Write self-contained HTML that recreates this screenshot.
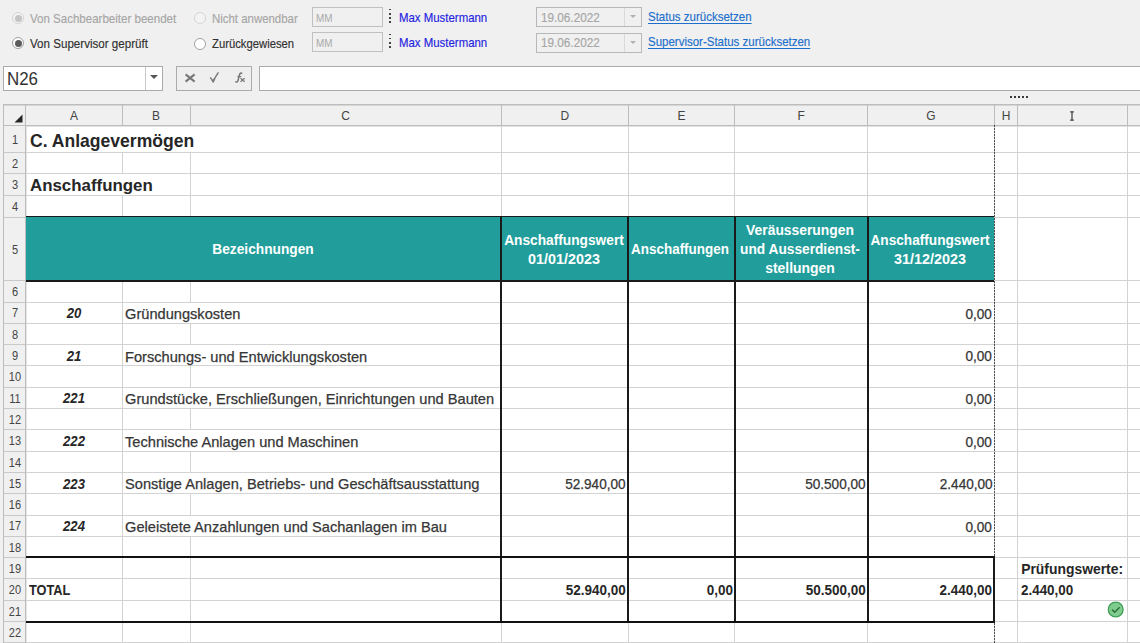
<!DOCTYPE html>
<html><head><meta charset="utf-8"><style>
html,body{margin:0;padding:0;overflow:hidden;width:1140px;height:643px;background:#f0f0f0}
#root{width:1140px;height:643px;overflow:hidden;position:relative;font-family:"Liberation Sans",sans-serif;background:#f0f0f0}
#root>div,#root>span,#root>svg{position:absolute}
.t{white-space:pre;display:block}
</style></head><body><div id="root">
<div style="left:0px;top:0px;width:1140px;height:643px;background:#f0f0f0"></div>
<div style="left:26px;top:125px;width:1114px;height:518px;background:#fff"></div>
<div style="left:11.9px;top:11.7px;width:10px;height:10px;border:1.5px solid #d4d4d4;border-radius:50%;background:#f3f3f3"></div>
<div style="left:14.9px;top:14.7px;width:7px;height:7px;border-radius:50%;background:#c3c3c3"></div>
<div style="left:11.9px;top:37.3px;width:10px;height:10px;border:1.5px solid #a0a0a0;border-radius:50%;background:#fff"></div>
<div style="left:14.9px;top:40.3px;width:7px;height:7px;border-radius:50%;background:#5c5c5c"></div>
<div style="left:193.9px;top:11.8px;width:10px;height:10px;border:1.5px solid #d4d4d4;border-radius:50%;background:#f3f3f3"></div>
<div style="left:193.9px;top:37.5px;width:10px;height:10px;border:1.5px solid #a0a0a0;border-radius:50%;background:#fff"></div>
<span class="t" style="top:12.14px;font-size:12.2px;line-height:15.86px;color:#a6a6a6;left:29.5px;transform:scaleX(0.946);transform-origin:left;-webkit-text-stroke:0.15px currentColor;">Von Sachbearbeiter beendet</span>
<span class="t" style="top:37.14px;font-size:12.2px;line-height:15.86px;color:#303030;left:29.5px;transform:scaleX(0.951);transform-origin:left;-webkit-text-stroke:0.15px currentColor;">Von Supervisor geprüft</span>
<span class="t" style="top:12.24px;font-size:12.2px;line-height:15.86px;color:#a6a6a6;left:211.6px;transform:scaleX(0.937);transform-origin:left;-webkit-text-stroke:0.15px currentColor;">Nicht anwendbar</span>
<span class="t" style="top:37.24px;font-size:12.2px;line-height:15.86px;color:#303030;left:211.6px;transform:scaleX(0.925);transform-origin:left;-webkit-text-stroke:0.15px currentColor;">Zurückgewiesen</span>
<div style="left:312.4px;top:6.8px;width:70.9px;height:19.8px;border:1px solid #c0c0c0;box-sizing:border-box;background:#f0f0f0"></div>
<span class="t" style="top:10.64px;font-size:11px;line-height:14.3px;color:#a9a9a9;left:316.3px;transform:scaleX(0.9);transform-origin:left;">MM</span>
<div style="left:312.4px;top:32.4px;width:70.9px;height:20.1px;border:1px solid #c0c0c0;box-sizing:border-box;background:#f0f0f0"></div>
<span class="t" style="top:35.74px;font-size:11px;line-height:14.3px;color:#a9a9a9;left:316.3px;transform:scaleX(0.9);transform-origin:left;">MM</span>
<div style="left:389.0px;top:8.7px;width:1.6px;height:1.6px;background:#444"></div>
<div style="left:389.0px;top:13.0px;width:1.6px;height:1.6px;background:#444"></div>
<div style="left:389.0px;top:17.2px;width:1.6px;height:1.6px;background:#444"></div>
<div style="left:389.0px;top:21.4px;width:1.6px;height:1.6px;background:#444"></div>
<div style="left:389.0px;top:33.6px;width:1.6px;height:1.6px;background:#444"></div>
<div style="left:389.0px;top:37.8px;width:1.6px;height:1.6px;background:#444"></div>
<div style="left:389.0px;top:42.0px;width:1.6px;height:1.6px;background:#444"></div>
<div style="left:389.0px;top:46.2px;width:1.6px;height:1.6px;background:#444"></div>
<span class="t" style="top:10.84px;font-size:12.2px;line-height:15.86px;color:#1f1fe0;left:399.0px;transform:scaleX(0.937);transform-origin:left;-webkit-text-stroke:0.15px currentColor;">Max Mustermann</span>
<span class="t" style="top:35.84px;font-size:12.2px;line-height:15.86px;color:#1f1fe0;left:399.0px;transform:scaleX(0.937);transform-origin:left;-webkit-text-stroke:0.15px currentColor;">Max Mustermann</span>
<div style="left:536.3px;top:6.8px;width:105.4px;height:20.0px;border:1px solid #b8b8b8;box-sizing:border-box;background:#f0f0f0"></div>
<div style="left:624.0px;top:7.8px;width:1.0px;height:18.0px;background:#dadada"></div>
<div style="left:630.2px;top:15.3px;width:0;height:0;border-left:3.2px solid transparent;border-right:3.2px solid transparent;border-top:3.2px solid #b0b0b0"></div>
<span class="t" style="top:10.94px;font-size:12.2px;line-height:15.86px;color:#a6a6a6;left:540.8px;transform:scaleX(0.963);transform-origin:left;-webkit-text-stroke:0.15px currentColor;">19.06.2022</span>
<div style="left:536.3px;top:32.5px;width:105.4px;height:20.0px;border:1px solid #b8b8b8;box-sizing:border-box;background:#f0f0f0"></div>
<div style="left:624.0px;top:33.5px;width:1.0px;height:18.0px;background:#dadada"></div>
<div style="left:630.2px;top:41.0px;width:0;height:0;border-left:3.2px solid transparent;border-right:3.2px solid transparent;border-top:3.2px solid #b0b0b0"></div>
<span class="t" style="top:35.94px;font-size:12.2px;line-height:15.86px;color:#a6a6a6;left:540.8px;transform:scaleX(0.963);transform-origin:left;-webkit-text-stroke:0.15px currentColor;">19.06.2022</span>
<span class="t" style="top:10.44px;font-size:12.2px;line-height:15.86px;color:#1c6fcc;left:648.3px;transform:scaleX(0.944);transform-origin:left;text-decoration:underline;text-underline-offset:1.5px;-webkit-text-stroke:0.15px currentColor;">Status zurücksetzen</span>
<span class="t" style="top:35.44px;font-size:12.2px;line-height:15.86px;color:#1c6fcc;left:648.3px;transform:scaleX(0.943);transform-origin:left;text-decoration:underline;text-underline-offset:1.5px;-webkit-text-stroke:0.15px currentColor;">Supervisor-Status zurücksetzen</span>
<div style="left:3px;top:66.3px;width:159.6px;height:24.3px;border:1px solid #ababab;box-sizing:border-box;background:#fff"></div>
<div style="left:145.2px;top:67.3px;width:1.0px;height:22.3px;background:#c8c8c8"></div>
<div style="left:149.8px;top:75.2px;width:0;height:0;border-left:4.2px solid transparent;border-right:4.2px solid transparent;border-top:4.8px solid #555"></div>
<span class="t" style="top:67.86px;font-size:17.5px;line-height:22.75px;color:#333;left:6.9px;transform:scaleX(0.965);transform-origin:left;">N26</span>
<div style="left:176.4px;top:66.4px;width:75.4px;height:24.2px;border:1px solid #ababab;box-sizing:border-box;background:#efefef"></div>
<svg style="position:absolute;left:184px;top:72px" width="12" height="11" viewBox="0 0 12 11"><path d="M1.6 2.4 L10.6 9.6 M10.6 2.4 L1.6 9.6" stroke="#777" stroke-width="2"/></svg>
<svg style="position:absolute;left:209px;top:71px" width="11" height="12" viewBox="0 0 11 12"><path d="M1.3 6.4 L3.9 10.2 L9.4 1.4" stroke="#7c7c7c" stroke-width="1.5" fill="none"/><path d="M3.2 9.2 L4.2 10.6 L5.8 7.6" stroke="#7c7c7c" stroke-width="1.6" fill="none"/></svg>
<svg style="position:absolute;left:233px;top:72px" width="13" height="11" viewBox="0 0 13 11"><path d="M9.2 1.6 C8 0.6 6.8 1.2 6.4 3 L5 8.6 C4.6 10.2 3.6 10.3 2.2 9.6" stroke="#777" stroke-width="1.5" fill="none"/><path d="M4.4 4.6 L8.2 4.6" stroke="#777" stroke-width="1.2"/><path d="M7.6 6.2 L11.6 9.8 M11.6 6.2 L7.6 9.8" stroke="#777" stroke-width="1.3"/></svg>
<div style="left:259.4px;top:66.3px;width:890.6px;height:24.3px;border:1px solid #ababab;box-sizing:border-box;background:#fff"></div>
<div style="left:1010px;top:96px;width:2px;height:2px;background:#3a3a3a"></div>
<div style="left:1014px;top:96px;width:2px;height:2px;background:#3a3a3a"></div>
<div style="left:1018px;top:96px;width:2px;height:2px;background:#3a3a3a"></div>
<div style="left:1022px;top:96px;width:2px;height:2px;background:#3a3a3a"></div>
<div style="left:1026px;top:96px;width:2px;height:2px;background:#3a3a3a"></div>
<div style="left:4px;top:104px;width:1136px;height:21px;background:#f0f0f0"></div>
<div style="left:4px;top:104px;width:1136px;height:1px;background:#bdbdbd"></div>
<div style="left:4px;top:105px;width:1136px;height:1px;background:#d6d6d6"></div>
<div style="left:4px;top:125px;width:1136px;height:1px;background:#bdbdbd"></div>
<div style="left:26px;top:126px;width:1114px;height:1px;background:#e2e2e2"></div>
<div style="left:3px;top:104px;width:1px;height:539px;background:#bdbdbd"></div>
<div style="left:25px;top:104px;width:1px;height:21px;background:#bdbdbd"></div>
<div style="left:122px;top:104px;width:1px;height:21px;background:#bdbdbd"></div>
<div style="left:190px;top:104px;width:1px;height:21px;background:#bdbdbd"></div>
<div style="left:501px;top:104px;width:1px;height:21px;background:#bdbdbd"></div>
<div style="left:628px;top:104px;width:1px;height:21px;background:#bdbdbd"></div>
<div style="left:734px;top:104px;width:1px;height:21px;background:#bdbdbd"></div>
<div style="left:867px;top:104px;width:1px;height:21px;background:#bdbdbd"></div>
<div style="left:994px;top:104px;width:1px;height:21px;background:#bdbdbd"></div>
<div style="left:1017px;top:104px;width:1px;height:21px;background:#bdbdbd"></div>
<div style="left:1127px;top:104px;width:1px;height:21px;background:#bdbdbd"></div>
<svg style="position:absolute;left:14px;top:114px" width="9" height="9" viewBox="0 0 9 9"><path d="M8.5 0.5 L8.5 8.5 L0.5 8.5 Z" fill="#262626"/></svg>
<span class="t" style="top:109.44px;font-size:12px;line-height:15.6px;color:#444;left:-76.1px;width:300px;text-align:center;">A</span>
<span class="t" style="top:109.44px;font-size:12px;line-height:15.6px;color:#444;left:6.1px;width:300px;text-align:center;">B</span>
<span class="t" style="top:109.44px;font-size:12px;line-height:15.6px;color:#444;left:195.7px;width:300px;text-align:center;">C</span>
<span class="t" style="top:109.44px;font-size:12px;line-height:15.6px;color:#444;left:414.75px;width:300px;text-align:center;">D</span>
<span class="t" style="top:109.44px;font-size:12px;line-height:15.6px;color:#444;left:531.4px;width:300px;text-align:center;">E</span>
<span class="t" style="top:109.44px;font-size:12px;line-height:15.6px;color:#444;left:651.1px;width:300px;text-align:center;">F</span>
<span class="t" style="top:109.44px;font-size:12px;line-height:15.6px;color:#444;left:781.0px;width:300px;text-align:center;">G</span>
<span class="t" style="top:109.44px;font-size:12px;line-height:15.6px;color:#444;left:856.15px;width:300px;text-align:center;">H</span>
<svg style="position:absolute;left:1069.1px;top:111.1px" width="6" height="10" viewBox="0 0 6 10"><path d="M1.2 0.9 H4.8 M3 0.9 V9.1 M1.2 9.1 H4.8" stroke="#3a3a3a" stroke-width="1.2" fill="none"/></svg>
<div style="left:4px;top:126px;width:21px;height:517px;background:#f0f0f0"></div>
<div style="left:25px;top:125px;width:1px;height:518px;background:#bdbdbd"></div>
<div style="left:26px;top:127px;width:1px;height:516px;background:#e4e4e4"></div>
<div style="left:4px;top:152px;width:21px;height:1px;background:#c9c9c9"></div>
<span class="t" style="top:132.74px;font-size:12px;line-height:15.6px;color:#444;left:-135.1px;width:300px;text-align:center;transform:scaleX(0.92);transform-origin:center;">1</span>
<div style="left:4px;top:173px;width:21px;height:1px;background:#c9c9c9"></div>
<span class="t" style="top:156.69px;font-size:12px;line-height:15.6px;color:#444;left:-135.1px;width:300px;text-align:center;transform:scaleX(0.92);transform-origin:center;">2</span>
<div style="left:4px;top:195px;width:21px;height:1px;background:#c9c9c9"></div>
<span class="t" style="top:178.49px;font-size:12px;line-height:15.6px;color:#444;left:-135.1px;width:300px;text-align:center;transform:scaleX(0.92);transform-origin:center;">3</span>
<div style="left:4px;top:217px;width:21px;height:1px;background:#c9c9c9"></div>
<span class="t" style="top:200.24px;font-size:12px;line-height:15.6px;color:#444;left:-135.1px;width:300px;text-align:center;transform:scaleX(0.92);transform-origin:center;">4</span>
<div style="left:4px;top:280px;width:21px;height:1px;background:#c9c9c9"></div>
<span class="t" style="top:242.69px;font-size:12px;line-height:15.6px;color:#444;left:-135.1px;width:300px;text-align:center;transform:scaleX(0.92);transform-origin:center;">5</span>
<div style="left:4px;top:302px;width:21px;height:1px;background:#c9c9c9"></div>
<span class="t" style="top:285.19px;font-size:12px;line-height:15.6px;color:#444;left:-135.1px;width:300px;text-align:center;transform:scaleX(0.92);transform-origin:center;">6</span>
<div style="left:4px;top:323px;width:21px;height:1px;background:#c9c9c9"></div>
<span class="t" style="top:306.49px;font-size:12px;line-height:15.6px;color:#444;left:-135.1px;width:300px;text-align:center;transform:scaleX(0.92);transform-origin:center;">7</span>
<div style="left:4px;top:344px;width:21px;height:1px;background:#c9c9c9"></div>
<span class="t" style="top:327.79px;font-size:12px;line-height:15.6px;color:#444;left:-135.1px;width:300px;text-align:center;transform:scaleX(0.92);transform-origin:center;">8</span>
<div style="left:4px;top:365px;width:21px;height:1px;background:#c9c9c9"></div>
<span class="t" style="top:349.09px;font-size:12px;line-height:15.6px;color:#444;left:-135.1px;width:300px;text-align:center;transform:scaleX(0.92);transform-origin:center;">9</span>
<div style="left:4px;top:387px;width:21px;height:1px;background:#c9c9c9"></div>
<span class="t" style="top:370.39px;font-size:12px;line-height:15.6px;color:#444;left:-135.1px;width:300px;text-align:center;transform:scaleX(0.92);transform-origin:center;">10</span>
<div style="left:4px;top:408px;width:21px;height:1px;background:#c9c9c9"></div>
<span class="t" style="top:391.69px;font-size:12px;line-height:15.6px;color:#444;left:-135.1px;width:300px;text-align:center;transform:scaleX(0.92);transform-origin:center;">11</span>
<div style="left:4px;top:429px;width:21px;height:1px;background:#c9c9c9"></div>
<span class="t" style="top:412.99px;font-size:12px;line-height:15.6px;color:#444;left:-135.1px;width:300px;text-align:center;transform:scaleX(0.92);transform-origin:center;">12</span>
<div style="left:4px;top:451px;width:21px;height:1px;background:#c9c9c9"></div>
<span class="t" style="top:434.29px;font-size:12px;line-height:15.6px;color:#444;left:-135.1px;width:300px;text-align:center;transform:scaleX(0.92);transform-origin:center;">13</span>
<div style="left:4px;top:472px;width:21px;height:1px;background:#c9c9c9"></div>
<span class="t" style="top:455.59px;font-size:12px;line-height:15.6px;color:#444;left:-135.1px;width:300px;text-align:center;transform:scaleX(0.92);transform-origin:center;">14</span>
<div style="left:4px;top:493px;width:21px;height:1px;background:#c9c9c9"></div>
<span class="t" style="top:476.89px;font-size:12px;line-height:15.6px;color:#444;left:-135.1px;width:300px;text-align:center;transform:scaleX(0.92);transform-origin:center;">15</span>
<div style="left:4px;top:515px;width:21px;height:1px;background:#c9c9c9"></div>
<span class="t" style="top:498.19px;font-size:12px;line-height:15.6px;color:#444;left:-135.1px;width:300px;text-align:center;transform:scaleX(0.92);transform-origin:center;">16</span>
<div style="left:4px;top:536px;width:21px;height:1px;background:#c9c9c9"></div>
<span class="t" style="top:519.49px;font-size:12px;line-height:15.6px;color:#444;left:-135.1px;width:300px;text-align:center;transform:scaleX(0.92);transform-origin:center;">17</span>
<div style="left:4px;top:557px;width:21px;height:1px;background:#c9c9c9"></div>
<span class="t" style="top:540.79px;font-size:12px;line-height:15.6px;color:#444;left:-135.1px;width:300px;text-align:center;transform:scaleX(0.92);transform-origin:center;">18</span>
<div style="left:4px;top:578px;width:21px;height:1px;background:#c9c9c9"></div>
<span class="t" style="top:562.09px;font-size:12px;line-height:15.6px;color:#444;left:-135.1px;width:300px;text-align:center;transform:scaleX(0.92);transform-origin:center;">19</span>
<div style="left:4px;top:600px;width:21px;height:1px;background:#c9c9c9"></div>
<span class="t" style="top:583.39px;font-size:12px;line-height:15.6px;color:#444;left:-135.1px;width:300px;text-align:center;transform:scaleX(0.92);transform-origin:center;">20</span>
<div style="left:4px;top:621px;width:21px;height:1px;background:#c9c9c9"></div>
<span class="t" style="top:604.69px;font-size:12px;line-height:15.6px;color:#444;left:-135.1px;width:300px;text-align:center;transform:scaleX(0.92);transform-origin:center;">21</span>
<div style="left:4px;top:642px;width:21px;height:1px;background:#c9c9c9"></div>
<span class="t" style="top:625.99px;font-size:12px;line-height:15.6px;color:#444;left:-135.1px;width:300px;text-align:center;transform:scaleX(0.92);transform-origin:center;">22</span>
<div style="left:26px;top:152px;width:1114px;height:1px;background:#d3d3d3"></div>
<div style="left:26px;top:173px;width:1114px;height:1px;background:#d3d3d3"></div>
<div style="left:26px;top:195px;width:1114px;height:1px;background:#d3d3d3"></div>
<div style="left:26px;top:217px;width:1114px;height:1px;background:#d3d3d3"></div>
<div style="left:26px;top:280px;width:1114px;height:1px;background:#d3d3d3"></div>
<div style="left:26px;top:302px;width:1114px;height:1px;background:#d3d3d3"></div>
<div style="left:26px;top:323px;width:1114px;height:1px;background:#d3d3d3"></div>
<div style="left:26px;top:344px;width:1114px;height:1px;background:#d3d3d3"></div>
<div style="left:26px;top:365px;width:1114px;height:1px;background:#d3d3d3"></div>
<div style="left:26px;top:387px;width:1114px;height:1px;background:#d3d3d3"></div>
<div style="left:26px;top:408px;width:1114px;height:1px;background:#d3d3d3"></div>
<div style="left:26px;top:429px;width:1114px;height:1px;background:#d3d3d3"></div>
<div style="left:26px;top:451px;width:1114px;height:1px;background:#d3d3d3"></div>
<div style="left:26px;top:472px;width:1114px;height:1px;background:#d3d3d3"></div>
<div style="left:26px;top:493px;width:1114px;height:1px;background:#d3d3d3"></div>
<div style="left:26px;top:515px;width:1114px;height:1px;background:#d3d3d3"></div>
<div style="left:26px;top:536px;width:1114px;height:1px;background:#d3d3d3"></div>
<div style="left:26px;top:557px;width:1114px;height:1px;background:#d3d3d3"></div>
<div style="left:26px;top:578px;width:1114px;height:1px;background:#d3d3d3"></div>
<div style="left:26px;top:600px;width:1114px;height:1px;background:#d3d3d3"></div>
<div style="left:26px;top:621px;width:1114px;height:1px;background:#d3d3d3"></div>
<div style="left:26px;top:642px;width:1114px;height:1px;background:#d3d3d3"></div>
<div style="left:122px;top:153px;width:1px;height:20px;background:#d3d3d3"></div>
<div style="left:122px;top:196px;width:1px;height:21px;background:#d3d3d3"></div>
<div style="left:122px;top:281px;width:1px;height:21px;background:#d3d3d3"></div>
<div style="left:122px;top:303px;width:1px;height:20px;background:#d3d3d3"></div>
<div style="left:122px;top:324px;width:1px;height:20px;background:#d3d3d3"></div>
<div style="left:122px;top:345px;width:1px;height:20px;background:#d3d3d3"></div>
<div style="left:122px;top:366px;width:1px;height:21px;background:#d3d3d3"></div>
<div style="left:122px;top:388px;width:1px;height:20px;background:#d3d3d3"></div>
<div style="left:122px;top:409px;width:1px;height:20px;background:#d3d3d3"></div>
<div style="left:122px;top:430px;width:1px;height:21px;background:#d3d3d3"></div>
<div style="left:122px;top:452px;width:1px;height:20px;background:#d3d3d3"></div>
<div style="left:122px;top:473px;width:1px;height:20px;background:#d3d3d3"></div>
<div style="left:122px;top:494px;width:1px;height:21px;background:#d3d3d3"></div>
<div style="left:122px;top:516px;width:1px;height:20px;background:#d3d3d3"></div>
<div style="left:122px;top:537px;width:1px;height:20px;background:#d3d3d3"></div>
<div style="left:122px;top:558px;width:1px;height:20px;background:#d3d3d3"></div>
<div style="left:122px;top:579px;width:1px;height:21px;background:#d3d3d3"></div>
<div style="left:122px;top:601px;width:1px;height:20px;background:#d3d3d3"></div>
<div style="left:122px;top:622px;width:1px;height:20px;background:#d3d3d3"></div>
<div style="left:190px;top:153px;width:1px;height:20px;background:#d3d3d3"></div>
<div style="left:190px;top:174px;width:1px;height:21px;background:#d3d3d3"></div>
<div style="left:190px;top:196px;width:1px;height:21px;background:#d3d3d3"></div>
<div style="left:190px;top:281px;width:1px;height:21px;background:#d3d3d3"></div>
<div style="left:190px;top:324px;width:1px;height:20px;background:#d3d3d3"></div>
<div style="left:190px;top:366px;width:1px;height:21px;background:#d3d3d3"></div>
<div style="left:190px;top:409px;width:1px;height:20px;background:#d3d3d3"></div>
<div style="left:190px;top:452px;width:1px;height:20px;background:#d3d3d3"></div>
<div style="left:190px;top:494px;width:1px;height:21px;background:#d3d3d3"></div>
<div style="left:190px;top:537px;width:1px;height:20px;background:#d3d3d3"></div>
<div style="left:190px;top:558px;width:1px;height:20px;background:#d3d3d3"></div>
<div style="left:190px;top:579px;width:1px;height:21px;background:#d3d3d3"></div>
<div style="left:190px;top:601px;width:1px;height:20px;background:#d3d3d3"></div>
<div style="left:190px;top:622px;width:1px;height:20px;background:#d3d3d3"></div>
<div style="left:501px;top:126px;width:1px;height:26px;background:#d3d3d3"></div>
<div style="left:501px;top:153px;width:1px;height:20px;background:#d3d3d3"></div>
<div style="left:501px;top:174px;width:1px;height:21px;background:#d3d3d3"></div>
<div style="left:501px;top:196px;width:1px;height:21px;background:#d3d3d3"></div>
<div style="left:501px;top:622px;width:1px;height:20px;background:#d3d3d3"></div>
<div style="left:628px;top:126px;width:1px;height:26px;background:#d3d3d3"></div>
<div style="left:628px;top:153px;width:1px;height:20px;background:#d3d3d3"></div>
<div style="left:628px;top:174px;width:1px;height:21px;background:#d3d3d3"></div>
<div style="left:628px;top:196px;width:1px;height:21px;background:#d3d3d3"></div>
<div style="left:628px;top:622px;width:1px;height:20px;background:#d3d3d3"></div>
<div style="left:734px;top:126px;width:1px;height:26px;background:#d3d3d3"></div>
<div style="left:734px;top:153px;width:1px;height:20px;background:#d3d3d3"></div>
<div style="left:734px;top:174px;width:1px;height:21px;background:#d3d3d3"></div>
<div style="left:734px;top:196px;width:1px;height:21px;background:#d3d3d3"></div>
<div style="left:734px;top:622px;width:1px;height:20px;background:#d3d3d3"></div>
<div style="left:867px;top:126px;width:1px;height:26px;background:#d3d3d3"></div>
<div style="left:867px;top:153px;width:1px;height:20px;background:#d3d3d3"></div>
<div style="left:867px;top:174px;width:1px;height:21px;background:#d3d3d3"></div>
<div style="left:867px;top:196px;width:1px;height:21px;background:#d3d3d3"></div>
<div style="left:867px;top:622px;width:1px;height:20px;background:#d3d3d3"></div>
<div style="left:1017px;top:126px;width:1px;height:26px;background:#d3d3d3"></div>
<div style="left:1017px;top:153px;width:1px;height:20px;background:#d3d3d3"></div>
<div style="left:1017px;top:174px;width:1px;height:21px;background:#d3d3d3"></div>
<div style="left:1017px;top:196px;width:1px;height:21px;background:#d3d3d3"></div>
<div style="left:1017px;top:218px;width:1px;height:62px;background:#d3d3d3"></div>
<div style="left:1017px;top:281px;width:1px;height:21px;background:#d3d3d3"></div>
<div style="left:1017px;top:303px;width:1px;height:20px;background:#d3d3d3"></div>
<div style="left:1017px;top:324px;width:1px;height:20px;background:#d3d3d3"></div>
<div style="left:1017px;top:345px;width:1px;height:20px;background:#d3d3d3"></div>
<div style="left:1017px;top:366px;width:1px;height:21px;background:#d3d3d3"></div>
<div style="left:1017px;top:388px;width:1px;height:20px;background:#d3d3d3"></div>
<div style="left:1017px;top:409px;width:1px;height:20px;background:#d3d3d3"></div>
<div style="left:1017px;top:430px;width:1px;height:21px;background:#d3d3d3"></div>
<div style="left:1017px;top:452px;width:1px;height:20px;background:#d3d3d3"></div>
<div style="left:1017px;top:473px;width:1px;height:20px;background:#d3d3d3"></div>
<div style="left:1017px;top:494px;width:1px;height:21px;background:#d3d3d3"></div>
<div style="left:1017px;top:516px;width:1px;height:20px;background:#d3d3d3"></div>
<div style="left:1017px;top:537px;width:1px;height:20px;background:#d3d3d3"></div>
<div style="left:1017px;top:558px;width:1px;height:20px;background:#d3d3d3"></div>
<div style="left:1017px;top:579px;width:1px;height:21px;background:#d3d3d3"></div>
<div style="left:1017px;top:601px;width:1px;height:20px;background:#d3d3d3"></div>
<div style="left:1017px;top:622px;width:1px;height:20px;background:#d3d3d3"></div>
<div style="left:1127px;top:126px;width:1px;height:26px;background:#d3d3d3"></div>
<div style="left:1127px;top:153px;width:1px;height:20px;background:#d3d3d3"></div>
<div style="left:1127px;top:174px;width:1px;height:21px;background:#d3d3d3"></div>
<div style="left:1127px;top:196px;width:1px;height:21px;background:#d3d3d3"></div>
<div style="left:1127px;top:218px;width:1px;height:62px;background:#d3d3d3"></div>
<div style="left:1127px;top:281px;width:1px;height:21px;background:#d3d3d3"></div>
<div style="left:1127px;top:303px;width:1px;height:20px;background:#d3d3d3"></div>
<div style="left:1127px;top:324px;width:1px;height:20px;background:#d3d3d3"></div>
<div style="left:1127px;top:345px;width:1px;height:20px;background:#d3d3d3"></div>
<div style="left:1127px;top:366px;width:1px;height:21px;background:#d3d3d3"></div>
<div style="left:1127px;top:388px;width:1px;height:20px;background:#d3d3d3"></div>
<div style="left:1127px;top:409px;width:1px;height:20px;background:#d3d3d3"></div>
<div style="left:1127px;top:430px;width:1px;height:21px;background:#d3d3d3"></div>
<div style="left:1127px;top:452px;width:1px;height:20px;background:#d3d3d3"></div>
<div style="left:1127px;top:473px;width:1px;height:20px;background:#d3d3d3"></div>
<div style="left:1127px;top:494px;width:1px;height:21px;background:#d3d3d3"></div>
<div style="left:1127px;top:516px;width:1px;height:20px;background:#d3d3d3"></div>
<div style="left:1127px;top:537px;width:1px;height:20px;background:#d3d3d3"></div>
<div style="left:1127px;top:558px;width:1px;height:20px;background:#d3d3d3"></div>
<div style="left:1127px;top:579px;width:1px;height:21px;background:#d3d3d3"></div>
<div style="left:1127px;top:601px;width:1px;height:20px;background:#d3d3d3"></div>
<div style="left:1127px;top:622px;width:1px;height:20px;background:#d3d3d3"></div>
<div style="left:26px;top:217px;width:968px;height:64px;background:#219e9b"></div>
<div style="left:26px;top:216px;width:968px;height:1px;background:#1a1a1a"></div>
<div style="left:26px;top:280px;width:968px;height:2px;background:#1a1a1a"></div>
<div style="left:500px;top:216px;width:2px;height:406px;background:#1a1a1a"></div>
<div style="left:627px;top:216px;width:2px;height:406px;background:#1a1a1a"></div>
<div style="left:734px;top:216px;width:2px;height:406px;background:#1a1a1a"></div>
<div style="left:867px;top:216px;width:2px;height:406px;background:#1a1a1a"></div>
<div style="left:26px;top:556px;width:969px;height:2px;background:#111"></div>
<div style="left:26px;top:621px;width:969px;height:2px;background:#111"></div>
<div style="left:993px;top:556px;width:2px;height:67px;background:#1a1a1a"></div>
<div style="left:994px;top:125px;width:1px;height:431px;background:repeating-linear-gradient(to bottom,#505050 0 2px,#d0d0d0 2px 3px)"></div>
<div style="left:994px;top:623px;width:1px;height:20px;background:repeating-linear-gradient(to bottom,#505050 0 2px,#d0d0d0 2px 3px)"></div>
<span class="t" style="top:130.06px;font-size:18.2px;line-height:23.66px;color:#262626;font-weight:700;left:30.3px;transform:scaleX(0.965);transform-origin:left;">C. Anlagevermögen</span>
<span class="t" style="top:175.06px;font-size:16.8px;line-height:21.84px;color:#262626;font-weight:700;left:30.3px;transform:scaleX(1.005);transform-origin:left;">Anschaffungen</span>
<span class="t" style="top:240.15px;font-size:13.9px;line-height:18.07px;color:#fff;font-weight:700;left:112.8px;width:300px;text-align:center;transform:scaleX(0.987);transform-origin:center;">Bezeichnungen</span>
<span class="t" style="top:230.65px;font-size:13.9px;line-height:18.07px;color:#fff;font-weight:700;left:413.75px;width:300px;text-align:center;transform:scaleX(0.987);transform-origin:center;">Anschaffungswert</span>
<span class="t" style="top:249.55px;font-size:13.9px;line-height:18.07px;color:#fff;font-weight:700;left:413.75px;width:300px;text-align:center;transform:scaleX(1.032);transform-origin:center;">01/01/2023</span>
<span class="t" style="top:240.25px;font-size:13.9px;line-height:18.07px;color:#fff;font-weight:700;left:530.4px;width:300px;text-align:center;transform:scaleX(0.967);transform-origin:center;">Anschaffungen</span>
<span class="t" style="top:221.25px;font-size:13.9px;line-height:18.07px;color:#fff;font-weight:700;left:650.1px;width:300px;text-align:center;transform:scaleX(0.997);transform-origin:center;">Veräusserungen</span>
<span class="t" style="top:240.15px;font-size:13.9px;line-height:18.07px;color:#fff;font-weight:700;left:650.1px;width:300px;text-align:center;transform:scaleX(0.987);transform-origin:center;">und Ausserdienst-</span>
<span class="t" style="top:259.15px;font-size:13.9px;line-height:18.07px;color:#fff;font-weight:700;left:650.1px;width:300px;text-align:center;transform:scaleX(1.002);transform-origin:center;">stellungen</span>
<span class="t" style="top:230.65px;font-size:13.9px;line-height:18.07px;color:#fff;font-weight:700;left:780.0px;width:300px;text-align:center;transform:scaleX(0.982);transform-origin:center;">Anschaffungswert</span>
<span class="t" style="top:249.55px;font-size:13.9px;line-height:18.07px;color:#fff;font-weight:700;left:780.0px;width:300px;text-align:center;transform:scaleX(1.032);transform-origin:center;">31/12/2023</span>
<span class="t" style="top:305.25px;font-size:13.8px;line-height:17.94px;color:#262626;font-weight:700;font-style:italic;left:-76.4px;width:300px;text-align:center;transform:scaleX(0.95);transform-origin:center;">20</span>
<span class="t" style="top:304.05px;font-size:15px;line-height:19.5px;color:#363636;left:125.0px;transform:scaleX(0.975);transform-origin:left;-webkit-text-stroke:0.25px currentColor;">Gründungskosten</span>
<span class="t" style="top:304.75px;font-size:14.3px;line-height:18.59px;color:#363636;right:147.8px;transform:scaleX(0.95);transform-origin:right;-webkit-text-stroke:0.25px currentColor;">0,00</span>
<span class="t" style="top:347.85px;font-size:13.8px;line-height:17.94px;color:#262626;font-weight:700;font-style:italic;left:-76.4px;width:300px;text-align:center;transform:scaleX(0.95);transform-origin:center;">21</span>
<span class="t" style="top:346.65px;font-size:15px;line-height:19.5px;color:#363636;left:125.0px;transform:scaleX(0.975);transform-origin:left;-webkit-text-stroke:0.25px currentColor;">Forschungs- und Entwicklungskosten</span>
<span class="t" style="top:347.35px;font-size:14.3px;line-height:18.59px;color:#363636;right:147.8px;transform:scaleX(0.95);transform-origin:right;-webkit-text-stroke:0.25px currentColor;">0,00</span>
<span class="t" style="top:390.45px;font-size:13.8px;line-height:17.94px;color:#262626;font-weight:700;font-style:italic;left:-76.4px;width:300px;text-align:center;transform:scaleX(0.95);transform-origin:center;">221</span>
<span class="t" style="top:389.25px;font-size:15px;line-height:19.5px;color:#363636;left:125.0px;transform:scaleX(0.975);transform-origin:left;-webkit-text-stroke:0.25px currentColor;">Grundstücke, Erschließungen, Einrichtungen und Bauten</span>
<span class="t" style="top:389.95px;font-size:14.3px;line-height:18.59px;color:#363636;right:147.8px;transform:scaleX(0.95);transform-origin:right;-webkit-text-stroke:0.25px currentColor;">0,00</span>
<span class="t" style="top:433.05px;font-size:13.8px;line-height:17.94px;color:#262626;font-weight:700;font-style:italic;left:-76.4px;width:300px;text-align:center;transform:scaleX(0.95);transform-origin:center;">222</span>
<span class="t" style="top:431.85px;font-size:15px;line-height:19.5px;color:#363636;left:125.0px;transform:scaleX(0.975);transform-origin:left;-webkit-text-stroke:0.25px currentColor;">Technische Anlagen und Maschinen</span>
<span class="t" style="top:432.55px;font-size:14.3px;line-height:18.59px;color:#363636;right:147.8px;transform:scaleX(0.95);transform-origin:right;-webkit-text-stroke:0.25px currentColor;">0,00</span>
<span class="t" style="top:475.65px;font-size:13.8px;line-height:17.94px;color:#262626;font-weight:700;font-style:italic;left:-76.4px;width:300px;text-align:center;transform:scaleX(0.95);transform-origin:center;">223</span>
<span class="t" style="top:474.45px;font-size:15px;line-height:19.5px;color:#363636;left:125.0px;transform:scaleX(0.975);transform-origin:left;-webkit-text-stroke:0.25px currentColor;">Sonstige Anlagen, Betriebs- und Geschäftsausstattung</span>
<span class="t" style="top:475.15px;font-size:14.3px;line-height:18.59px;color:#363636;right:147.8px;transform:scaleX(0.95);transform-origin:right;-webkit-text-stroke:0.25px currentColor;">2.440,00</span>
<span class="t" style="top:518.25px;font-size:13.8px;line-height:17.94px;color:#262626;font-weight:700;font-style:italic;left:-76.4px;width:300px;text-align:center;transform:scaleX(0.95);transform-origin:center;">224</span>
<span class="t" style="top:517.05px;font-size:15px;line-height:19.5px;color:#363636;left:125.0px;transform:scaleX(0.975);transform-origin:left;-webkit-text-stroke:0.25px currentColor;">Geleistete Anzahlungen und Sachanlagen im Bau</span>
<span class="t" style="top:517.75px;font-size:14.3px;line-height:18.59px;color:#363636;right:147.8px;transform:scaleX(0.95);transform-origin:right;-webkit-text-stroke:0.25px currentColor;">0,00</span>
<span class="t" style="top:475.15px;font-size:14.3px;line-height:18.59px;color:#363636;right:514.0px;transform:scaleX(0.95);transform-origin:right;-webkit-text-stroke:0.25px currentColor;">52.940,00</span>
<span class="t" style="top:475.15px;font-size:14.3px;line-height:18.59px;color:#363636;right:274.2px;transform:scaleX(0.95);transform-origin:right;-webkit-text-stroke:0.25px currentColor;">50.500,00</span>
<span class="t" style="top:580.75px;font-size:13.9px;line-height:18.07px;color:#262626;font-weight:700;left:28.9px;transform:scaleX(0.92);transform-origin:left;">TOTAL</span>
<span class="t" style="top:580.75px;font-size:13.9px;line-height:18.07px;color:#262626;font-weight:700;right:514.0px;transform:scaleX(0.97);transform-origin:right;">52.940,00</span>
<span class="t" style="top:580.75px;font-size:13.9px;line-height:18.07px;color:#262626;font-weight:700;right:407.4px;transform:scaleX(0.97);transform-origin:right;">0,00</span>
<span class="t" style="top:580.75px;font-size:13.9px;line-height:18.07px;color:#262626;font-weight:700;right:274.2px;transform:scaleX(0.97);transform-origin:right;">50.500,00</span>
<span class="t" style="top:580.75px;font-size:13.9px;line-height:18.07px;color:#262626;font-weight:700;right:148.2px;transform:scaleX(0.97);transform-origin:right;">2.440,00</span>
<span class="t" style="top:559.75px;font-size:13.9px;line-height:18.07px;color:#262626;font-weight:700;left:1021.2px;">Prüfungswerte:</span>
<span class="t" style="top:580.75px;font-size:13.9px;line-height:18.07px;color:#262626;font-weight:700;left:1021.2px;transform:scaleX(0.965);transform-origin:left;">2.440,00</span>
<svg style="position:absolute;left:1107px;top:601px" width="18" height="18" viewBox="0 0 18 18"><circle cx="8.7" cy="8.5" r="7.4" fill="#80cc8e" stroke="#3f9f55" stroke-width="1.3"/><path d="M5 8.6 L7.7 11.2 L12.6 6.2" stroke="#2f6f3a" stroke-width="1.5" fill="none"/></svg>
</div></body></html>
